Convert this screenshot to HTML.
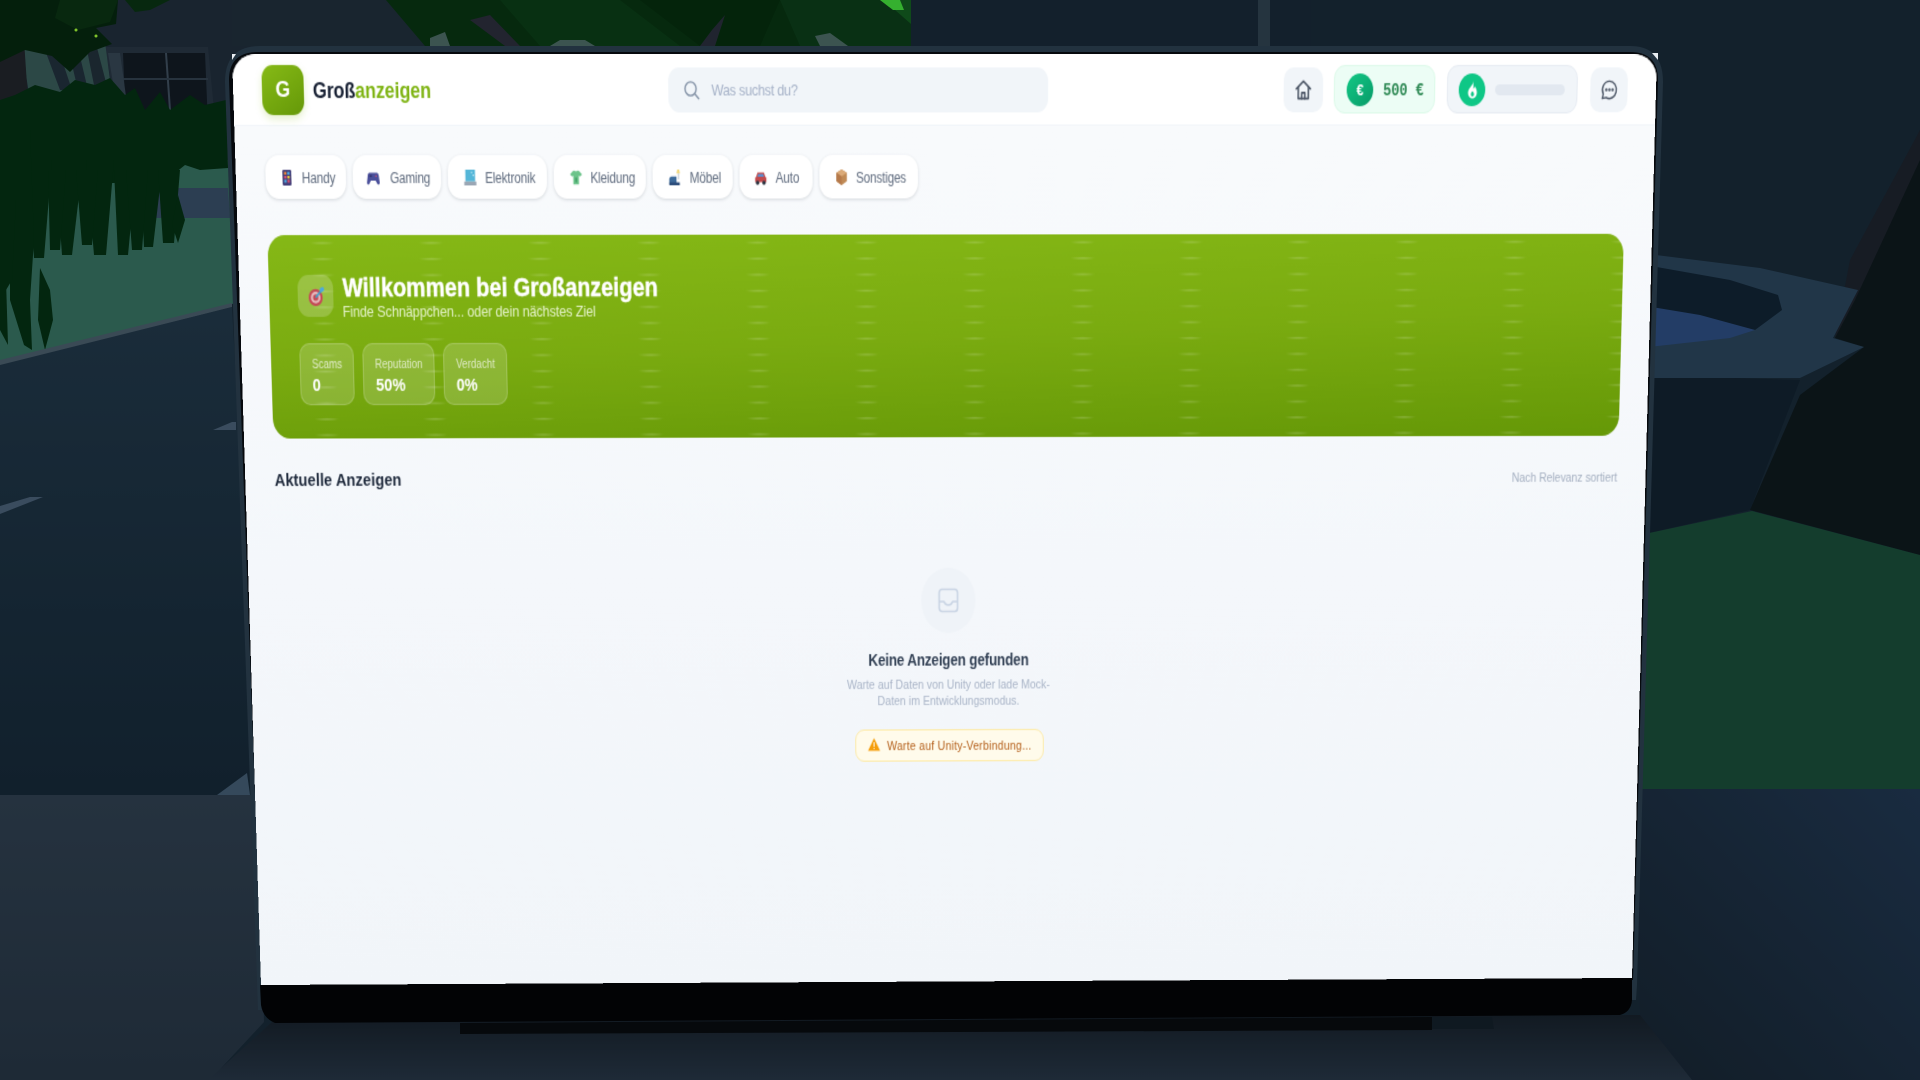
<!DOCTYPE html>
<html lang="de"><head><meta charset="utf-8"><title>Großanzeigen</title>
<style>
html,body{margin:0;padding:0;width:1920px;height:1080px;overflow:hidden;background:#13212c;font-family:"Liberation Sans",sans-serif}
#bg{position:absolute;left:0;top:0}
#screen{position:absolute;left:0;top:0;width:1440px;height:790px;overflow:hidden;border-radius:24px 24px 0 0/20px 20px 0 0;transform-origin:0 0;
transform:matrix3d(0.998645,0.000295326,0,0.00000546896, 0.0497691,1.22777,0,0.0000500395, 0,0,1,0, 232,54,0,1);
background:linear-gradient(180deg,#f8fafc 60px,#f4f7fb 55%,#f1f5f9 100%)}
#screen div,#screen span,#screen svg{position:absolute;white-space:nowrap}
.hd{left:0;top:0;width:1440px;height:58px;background:#fff;border-bottom:1px solid #f1f5f9}
.box{background:#f1f5f9;border-radius:10px}
.pill{top:83px;height:36px;background:#fff;border-radius:13px;box-shadow:0 1px 3px rgba(30,41,59,.16)}
.pt{top:84px;line-height:36px;font-size:12px;color:#5f6b7e;letter-spacing:-.2px}
.ico{top:95px;width:13px;height:13px}
.stat{top:91px;height:52px;background:rgba(255,255,255,.16);border:1px solid rgba(255,255,255,.2);border-radius:10px;box-sizing:border-box}
.sl{font-size:10px;line-height:12px;color:rgba(255,255,255,.72)}
.sv{font-size:15px;line-height:18px;font-weight:bold;color:#fff}
</style></head><body>
<svg id="bg" width="1920" height="1080" viewBox="0 0 1920 1080">
<defs>
<linearGradient id="rd" x1="0" y1="0" x2="0" y2="1"><stop offset="0" stop-color="#1a2c3a"/><stop offset="1" stop-color="#11202c"/></linearGradient>
<linearGradient id="dl" x1="0" y1="0" x2="0" y2="1"><stop offset="0" stop-color="#25323f"/><stop offset="1" stop-color="#1e2a36"/></linearGradient>
<linearGradient id="dr" x1="1" y1="0" x2="0" y2="1"><stop offset="0" stop-color="#192b40"/><stop offset="1" stop-color="#121d27"/></linearGradient>
<linearGradient id="kb" x1="0" y1="0" x2="0" y2="1"><stop offset="0" stop-color="#121a22"/><stop offset="1" stop-color="#1e2a37"/></linearGradient>
</defs>
<rect width="1920" height="1080" fill="#13212c"/>
<!-- left wall -->
<rect x="0" y="0" width="400" height="200" fill="#19242f"/>
<!-- window -->
<polygon points="105,47 208,47 215,120 118,120" fill="#1f2a35"/>
<polygon points="123,53 205,53 208,125 126,125" fill="#0e151c"/>
<polygon points="165,53 167,53 171,110 169,110" fill="#323f4b"/>
<polygon points="123,78 208,78 208,80 123,80" fill="#27333e"/>
<polygon points="108,53 120,53 130,125 120,125" fill="#2a3742"/>
<!-- behind trunks -->
<polygon points="22,50 105,42 112,95 30,100" fill="#2c4846"/>
<polygon points="45,50 58,48 72,90 60,90" fill="#1a2630"/>
<polygon points="68,48 78,48 88,90 78,90" fill="#1a2630"/>
<polygon points="85,40 95,40 108,90 95,90" fill="#1a262e"/>
<polygon points="0,40 24,40 30,130 18,200 0,210" fill="#1a1d22"/>
<!-- canopy -->
<polygon points="0,0 118,0 116,24 96,28 112,44 90,52 70,72 52,56 25,50 0,62" fill="#041f0c"/>
<polygon points="60,0 118,0 110,22 78,30 55,18" fill="#08280f"/>
<polygon points="125,0 170,0 150,10 135,12" fill="#07280f"/>
<polygon points="360,0 400,0 400,20 385,18" fill="#07280f"/>
<circle cx="76" cy="30" r="1.500" fill="#7fc22a"/><circle cx="96" cy="36" r="1.500" fill="#7fc22a"/>
<!-- ground -->
<polygon points="60,160 232,160 236,303 0,362 0,160" fill="#2b5a4d"/>
<polygon points="140,188 228,188 230,218 140,218" fill="#2c3e52"/>
<!-- bush body -->
<polygon points="0,100 15,95 35,85 60,92 75,80 95,85 110,78 125,95 135,88 145,110 160,92 170,110 190,95 205,105 226,100 228,168 200,170 185,165 160,185 130,182 80,185 0,195" fill="#03260f"/>
<!-- blades -->
<g fill="#03260f">
<polygon points="28,160 52,160 44,258 34,258"/>
<polygon points="56,170 82,170 72,255 62,255"/>
<polygon points="86,160 114,160 106,255 94,255"/>
<polygon points="114,170 136,170 128,255 118,255"/>
<polygon points="140,170 162,170 153,247 144,247"/>
<polygon points="126,170 148,170 142,250 132,250"/>
<polygon points="158,170 180,170 174,243 163,243"/>
<polygon points="178,195 185,220 178,243 172,225"/>
<polygon points="40,268 50,290 53,320 45,350 38,320"/>
<polygon points="6,130 30,130 34,240 30,300 32,350 24,345 10,300 10,240"/>
<polygon points="0,240 6,280 8,345 0,330"/>
<polygon points="0,110 16,110 16,200 12,280 0,300"/>
<polygon points="76,170 98,170 92,245 82,245"/>
<polygon points="48,170 66,170 60,250 50,250"/>
</g>
<polygon points="0,360 232,303 232,307 0,366" fill="#3a4a55"/>
<!-- road -->
<polygon points="0,365 232,307 258,795 0,795" fill="url(#rd)"/>
<polygon points="0,506 30,497 43,497 0,514" fill="#3a4c5e"/>
<polygon points="213,430 232,422 236,422 236,430" fill="#3a4c5e"/>
<polygon points="217,795 247,773 250,795" fill="#35495b"/>
<!-- left desk -->
<polygon points="0,795 258,795 264,1022 210,1080 0,1080" fill="url(#dl)"/>
<!-- top middle: tree -->
<rect x="232" y="0" width="1000" height="46" fill="#19252f"/>
<rect x="911" y="0" width="400" height="46" fill="#13202c"/>
<polygon points="386,0 911,0 911,46 425,46" fill="#06290e"/>
<polygon points="500,0 620,0 680,46 540,46" fill="#083012"/>
<polygon points="640,0 780,0 760,46 700,46" fill="#04240b"/>
<polygon points="780,0 911,0 911,46 800,46" fill="#093014"/>
<polygon points="470,20 490,15 520,46 505,46" fill="#22242f"/>
<polygon points="712,30 725,15 715,46 700,46" fill="#20242f"/>
<polygon points="880,0 911,0 911,24 895,10" fill="#0f4a1a"/>
<polygon points="880,0 900,0 904,10 893,10" fill="#35b02f"/>
<polygon points="430,38 445,32 450,46 430,46" fill="#3c5450"/>
<polygon points="560,40 585,40 595,46 550,46" fill="#3c5450"/>
<polygon points="815,36 830,33 848,46 820,46" fill="#3c5450"/>
<rect x="1258" y="0" width="12" height="46" fill="#25343f"/>
<!-- right scene -->
<rect x="1640" y="0" width="280" height="789" fill="#13212c"/>
<polygon points="1640,375 1800,380 1750,510 1640,535" fill="#0e1b26"/>
<polygon points="1920,130 1835,338 1864,347 1800,395 1750,510 1920,555" fill="#0b1417"/>
<polygon points="1920,130 1850,260 1835,338 1855,300 1920,160" fill="#171c24"/>
<polygon points="1640,253 1760,268 1858,290 1833,338 1864,347 1800,378 1640,378" fill="#213648"/>
<polygon points="1640,264 1730,280 1778,295 1782,310 1755,330 1640,306" fill="#0d1c29"/>
<polygon points="1640,305 1700,315 1755,330 1730,338 1640,348" fill="#233d66"/>
<polygon points="1640,535 1752,511 1920,555 1920,789 1640,789" fill="#143d2d"/>
<!-- right desk -->
<polygon points="1636,789 1920,789 1920,1080 1690,1080 1640,1016" fill="url(#dr)"/>
<!-- keyboard base -->
<polygon points="272,1022 1640,1015 1692,1080 208,1080" fill="url(#kb)"/>
<!-- lid bezel -->
<path d="M225,82 Q225,46 260,46 L1630,46 Q1663,46 1663,82 L1637,985 L1636,1000 L258,1010 Z" fill="#22323f"/>
<path d="M229,80 Q229,52 258,52 L1630,52 Q1658,52 1658,80 L1633,980 L262,986 Z" fill="#06090d"/>
<!-- chin -->
<path d="M260,985 L1632,978 L1632,1000 Q1631,1012 1620,1015 L275,1023 Q263,1018 261,1005 Z" fill="#020305"/>
<!-- hinge -->
<polygon points="460,1023 1432,1017 1432,1030 460,1034" fill="#06090c"/>
<polygon points="1432,1017 1492,1017 1494,1029 1432,1029" fill="#0f1921"/>
<polygon points="1652,53 1658,53 1658,60" fill="#e8edf2"/>
<polygon points="232,54 236,54 232,60" fill="#e8edf2"/>
</svg>

<div id="screen">
 <div class="hd"></div>
 <!-- logo -->
 <div style="left:29px;top:9px;width:42px;height:41px;border-radius:11px;background:linear-gradient(145deg,#86ba16,#659808);box-shadow:0 3px 7px rgba(130,180,20,.22)"></div>
 <span style="left:29px;top:9px;width:42px;line-height:41px;text-align:center;color:#fff;font-weight:bold;font-size:19px">G</span>
 <span style="left:80px;top:20px;line-height:20px;font-size:18px;font-weight:bold;color:#172033;letter-spacing:-.1px">Groß<b style="color:#7fb414">anzeigen</b></span>

 <!-- search -->
 <div class="box" style="left:438px;top:11px;width:384px;height:37px;border-radius:11px"></div>
 <svg style="left:453px;top:21px" width="18" height="18" viewBox="0 0 18 18" fill="none" stroke="#7f8ea3" stroke-width="1.400"><circle cx="7.500" cy="7.500" r="5.600"/><path d="M11.800 11.800 16 16"/></svg>
 <span style="left:481.500px;top:21px;line-height:18px;font-size:13px;color:#a6b2c8;letter-spacing:-.35px">Was suchst du?</span>

 <!-- home -->
 <div class="box" style="left:1061px;top:11px;width:40px;height:37px"></div>
 <svg style="left:1071px;top:20px" width="20" height="19" viewBox="0 0 24 24" fill="none" stroke="#4b5565" stroke-width="2" stroke-linejoin="round" stroke-linecap="round"><path d="M3 11 12 3l9 8"/><path d="M5.500 9.500V21h13V9.500"/><path d="M10 21v-6h4v6"/></svg>

 <!-- money -->
 <div style="left:1112px;top:9px;width:103px;height:40px;background:#ecfdf5;border:1px solid #dcfae9;border-radius:11px;box-sizing:border-box"></div>
 <div style="left:1125px;top:16px;width:27px;height:27px;border-radius:50%;background:linear-gradient(135deg,#12c885,#089a68)"></div>
 <span style="left:1125px;top:16px;width:27px;line-height:27px;text-align:center;color:#fff;font-size:13px;font-weight:bold">€</span>
 <span style="left:1162px;top:22px;line-height:18px;font-family:'Liberation Mono',monospace;font-weight:bold;font-size:14px;color:#2f8a55;letter-spacing:-.15px">500 €</span>

 <!-- fuel -->
 <div style="left:1227px;top:9px;width:133px;height:40px;background:#f1f5f9;border:1px solid #e6ebf2;border-radius:11px;box-sizing:border-box"></div>
 <div style="left:1239px;top:16px;width:27px;height:27px;border-radius:50%;background:#0fc786"></div>
 <svg style="left:1243.500px;top:20px" width="18" height="18" viewBox="0 0 24 24" fill="#fff"><path d="M12.500 2c.6 3.600-1.200 5.300-3 7.300C7.700 11.300 6 13 6 15.800 6 19.300 8.700 22 12 22s6-2.700 6-6.200c0-3.300-1.700-5-2.600-7-.7 1.300-1.300 2-2.400 2.600.5-3-.1-6.700-.5-9.400Z"/><path d="M12 14c-1.500 1.500-2.200 2.500-2.200 3.800A2.200 2.200 0 0 0 12 20a2.200 2.200 0 0 0 2.200-2.200c0-1.300-.8-2.300-2.200-3.800Z" fill="#0fc786"/></svg>
 <div style="left:1276px;top:25px;width:71px;height:9px;border-radius:5px;background:#e2e8f0"></div>

 <!-- chat -->
 <div class="box" style="left:1373px;top:11px;width:38px;height:37px"></div>
 <svg style="left:1381.500px;top:20px" width="21" height="19" viewBox="0 0 24 24" fill="none" stroke="#4b5565" stroke-width="1.800" stroke-linejoin="round"><path d="M12 3a9 9 0 1 1-4.200 17L3 21l1.200-4.500A9 9 0 0 1 12 3Z"/><circle cx="8" cy="12" r=".7" fill="#4b5565"/><circle cx="12" cy="12" r=".7" fill="#4b5565"/><circle cx="16" cy="12" r=".7" fill="#4b5565"/></svg>

 <!-- category pills -->
 <div class="pill" style="left:29.500px;width:81.500px"></div>
 <div class="pill" style="left:118px;width:89px"></div>
 <div class="pill" style="left:214px;width:100px"></div>
 <div class="pill" style="left:321px;width:93px"></div>
 <div class="pill" style="left:421px;width:81px"></div>
 <div class="pill" style="left:509px;width:74px"></div>
 <div class="pill" style="left:590px;width:100px"></div>

 <svg class="ico" style="left:45px" viewBox="0 0 16 16"><rect x="2.500" y="0" width="11" height="16" rx="1.500" fill="#45407a"/><rect x="4.500" y="2" width="3" height="3" fill="#e8833a"/><rect x="8.500" y="2" width="3" height="3" fill="#4aa8e0"/><rect x="4.500" y="6" width="3" height="3" fill="#d94f70"/><rect x="8.500" y="6" width="3" height="3" fill="#e8c33a"/><rect x="4.500" y="10" width="3" height="3" fill="#4aa8e0"/><rect x="8.500" y="10" width="3" height="3" fill="#d94f70"/></svg>
 <span class="pt" style="left:66.500px">Handy</span>
 <svg class="ico" style="left:132px" viewBox="0 0 16 16"><path d="M4 3h8c1.500 0 2.500 1 3 3l1 7c.2 2-2 3-3 1.500L11 11H5l-2 3.500C2 16 0 15 .2 13l1-7C1.500 4 2.500 3 4 3Z" fill="#4a4f9a"/><circle cx="11.500" cy="6.500" r="1" fill="#d94f70"/><rect x="3.500" y="5.500" width="3" height="1.500" fill="#2a2d60"/></svg>
 <span class="pt" style="left:155.500px;letter-spacing:-.25px">Gaming</span>
 <svg class="ico" style="left:230px" viewBox="0 0 16 16"><rect x="2" y="0" width="12" height="12" fill="#54b6d8"/><rect x="9" y="2" width="1.500" height="1.500" fill="#d8f2fa"/><rect x="11" y="5" width="1.500" height="1.500" fill="#d8f2fa"/><rect x="0.500" y="12" width="15" height="4" fill="#9aa6b4"/></svg>
 <span class="pt" style="left:251.500px">Elektronik</span>
 <svg class="ico" style="left:336.500px" viewBox="0 0 16 16"><path d="M4 1.500 6 1c1 1 3 1 4 0l2 .5L15.500 5 13 7 11.500 6v9h-7V6L3 7 .5 5Z" fill="#6cc48a"/><rect x="7" y="8" width="2" height="5" fill="#3f9a62"/></svg>
 <span class="pt" style="left:358px">Kleidung</span>
 <svg class="ico" style="left:436.500px" viewBox="0 0 16 16"><path d="M11 0h2.500l1 4h-4.500Z" fill="#f1d980"/><rect x="12" y="4" width="1" height="6" fill="#aab4c0"/><path d="M1 10c0-2 2-3 4-3h5v8H1Z" fill="#3d6a9a"/><rect x="1" y="13" width="13" height="3" fill="#2a4a78"/></svg>
 <span class="pt" style="left:458.500px">Möbel</span>
 <svg class="ico" style="left:523.500px" viewBox="0 0 16 16"><path d="M4 3h8l2 5h1v5H1V8h1Z" fill="#c24a4c"/><path d="M5 4.500h6l1.200 3H3.800Z" fill="#5b8fd0"/><circle cx="4" cy="13.500" r="2.200" fill="#2b3340"/><circle cx="12" cy="13.500" r="2.200" fill="#2b3340"/></svg>
 <span class="pt" style="left:545.500px">Auto</span>
 <svg class="ico" style="left:605.500px" viewBox="0 0 16 16"><path d="M8 0 14.500 3.500V12L8 16 1.500 12V3.500Z" fill="#c08a55"/><path d="M8 0 14.500 3.500 8 7 1.500 3.500Z" fill="#dbaa78"/><path d="M8 7v9L1.500 12V3.500Z" fill="#b5794a"/></svg>
 <span class="pt" style="left:627px">Sonstiges</span>

 <!-- banner -->
 <div style="left:29.500px;top:149px;width:1381.500px;height:170px;border-radius:17px;overflow:hidden;background:radial-gradient(ellipse 13px 1.300px at 55px 6.500px,rgba(255,255,255,.22),rgba(255,255,255,.1) 60%,transparent 100%) 0 0/110.400px 13.400px,linear-gradient(178deg,#85b816,#7aab10 50%,#659807)"></div>
 <div style="left:59px;top:182px;width:36px;height:35px;border-radius:11px;background:rgba(255,255,255,.2)"></div>
 <svg style="left:68px;top:192px" width="20" height="16" viewBox="0 0 22 18"><circle cx="10" cy="10" r="8" fill="#c44a56"/><circle cx="10" cy="10" r="5.500" fill="#e6b9bb"/><circle cx="10" cy="10" r="3" fill="#c44a56"/><path d="M10 10 18 2" stroke="#3f9fc8" stroke-width="2"/><path d="M15 1 19 0l1 3-3 2-2-1Z" fill="#4aa8e0"/></svg>
 <span style="left:104.500px;top:180px;line-height:26px;font-size:22px;font-weight:bold;color:#fff;letter-spacing:0;-webkit-text-stroke:.35px #fff">Willkommen bei Großanzeigen</span>
 <span style="left:104px;top:205px;line-height:15px;font-size:13px;color:#e4f2c8;letter-spacing:-.17px">Finde Schnäppchen... oder dein nächstes Ziel</span>

 <div class="stat" style="left:59px;top:239px;width:55px"></div>
 <div class="stat" style="left:123px;top:239px;width:73px"></div>
 <div class="stat" style="left:205px;top:239px;width:65px"></div>
 <span class="sl" style="left:71.500px;top:252px">Scams</span><span class="sv" style="left:71.500px;top:266px">0</span>
 <span class="sl" style="left:135.500px;top:252px">Reputation</span><span class="sv" style="left:136px;top:266px">50%</span>
 <span class="sl" style="left:218px;top:252px">Verdacht</span><span class="sv" style="left:218px;top:266px">0%</span>

 <!-- section -->
 <span style="left:30px;top:346px;line-height:18px;font-size:15px;font-weight:bold;color:#1e293b;letter-spacing:.05px">Aktuelle Anzeigen</span>
 <span style="right:29.500px;top:348px;line-height:14px;font-size:11px;color:#a6b1c2;letter-spacing:-.1px">Nach Relevanz sortiert</span>

 <!-- empty -->
 <div style="left:692px;top:430px;width:56px;height:56px;border-radius:50%;background:#eff3f8"></div>
 <svg style="left:709px;top:447px" width="22" height="22" viewBox="0 0 22 22" fill="none" stroke="#c9d4e4" stroke-width="1.700" stroke-linejoin="round"><rect x="1.500" y="1.500" width="19" height="19" rx="3"/><path d="M1.500 12H6.500c.8 2 2.500 3 4.500 3s3.700-1 4.500-3h5"/></svg>
 <span style="left:0;width:1440px;top:500px;text-align:center;line-height:18px;font-size:14px;font-weight:bold;color:#334155;letter-spacing:-.2px">Keine Anzeigen gefunden</span>
 <span style="left:0;width:1440px;top:524px;text-align:center;line-height:14px;font-size:11px;color:#a9b4c7">Warte auf Daten von Unity oder lade Mock-</span>
 <span style="left:0;width:1440px;top:538px;text-align:center;line-height:14px;font-size:11px;color:#a9b4c7">Daten im Entwicklungsmodus.</span>
 <div style="left:622.500px;top:568.500px;width:196px;height:28px;box-sizing:border-box;background:#fffbeb;border:1px solid #fdeaa6;border-radius:9px"></div>
 <svg style="left:635.500px;top:576px" width="13" height="12" viewBox="0 0 13 12"><path d="M6.500 .5 12.800 11.500H.2Z" fill="#f59e0b"/><rect x="6" y="4" width="1" height="4" fill="#fff"/><rect x="6" y="9" width="1" height="1" fill="#fff"/></svg>
 <span style="left:656px;top:576.500px;line-height:14px;font-size:11px;color:#b45f1a;letter-spacing:.22px">Warte auf Unity-Verbindung...</span>
</div>
</body></html>
